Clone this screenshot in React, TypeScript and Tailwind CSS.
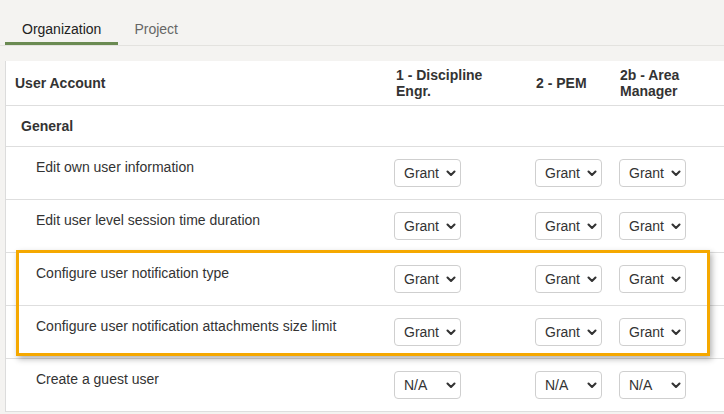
import React from "react";

const rows = [
  { label: "Edit own user information", value: "Grant" },
  { label: "Edit user level session time duration", value: "Grant" },
  { label: "Configure user notification type", value: "Grant" },
  { label: "Configure user notification attachments size limit", value: "Grant" },
  { label: "Create a guest user", value: "N/A" },
];

function Chevron() {
  return (
    <svg width="10" height="7" viewBox="0 0 10 7" className="shrink-0">
      <path d="M1.5 1.6 L5 5 L8.5 1.6" fill="none" stroke="#333" strokeWidth="2.1" strokeLinecap="round" strokeLinejoin="round" />
    </svg>
  );
}

function PermSelect({ value }: { value: string }) {
  return (
    <div className="flex items-center justify-between w-[67px] h-[28px] pl-[9px] pr-[4px] bg-white border border-[#cfcfcf] rounded-[4px] text-[14px] text-[#333]">
      <span>{value}</span>
      <Chevron />
    </div>
  );
}

export default function App() {
  return (
    <div
      className="relative w-[724px] h-[414px] overflow-hidden bg-[#f4f3f1]"
      style={{ fontFamily: '"Liberation Sans", Arial, sans-serif' }}
    >
      {/* tabs */}
      <div className="flex items-end h-[46px] pl-[5px] border-b border-[#e3e2df]">
        <div className="flex items-center h-[33px] px-[17px] pt-[4px] border-b-[3px] border-[#6a8a52] text-[14px] text-[#222]">
          Organization
        </div>
        <div className="flex items-center h-[33px] px-[16px] pt-[4px] border-b-[3px] border-transparent text-[14px] text-[#666]">
          Project
        </div>
      </div>

      <div className="h-[15px]" />

      {/* panel */}
      <div className="ml-[5px] bg-white border-l border-[#dcdcdc] text-[#333] text-[14px]">
        <div className="grid grid-cols-[382px_140px_84px_1fr] h-[45px] border-b border-[#dedede] font-bold leading-[16px]">
          <div className="flex items-center pl-[9px]">User Account</div>
          <div className="flex items-center pl-[8px]">
            1 - Discipline
            <br />
            Engr.
          </div>
          <div className="flex items-center pl-[8px]">2 - PEM</div>
          <div className="flex items-center pl-[8px]">
            2b - Area
            <br />
            Manager
          </div>
        </div>

        <div className="flex items-center h-[41px] pl-[15px] border-b border-[#dedede] font-bold">General</div>

        {rows.map((r) => (
          <div key={r.label} className="grid grid-cols-[382px_140px_84px_1fr] h-[53px] border-b border-[#dedede]">
            <div className="pl-[30px] pt-[10px] leading-[20px]">{r.label}</div>
            <div className="pl-[6px] pt-[12px]">
              <PermSelect value={r.value} />
            </div>
            <div className="pl-[7px] pt-[12px]">
              <PermSelect value={r.value} />
            </div>
            <div className="pl-[7px] pt-[12px]">
              <PermSelect value={r.value} />
            </div>
          </div>
        ))}
      </div>

      {/* highlight annotation */}
      <div className="absolute left-[16px] top-[250px] w-[694px] h-[106px] border-[3px] border-[#f5a800] shadow-[2px_3px_6px_rgba(0,0,0,0.3)]" />
    </div>
  );
}
